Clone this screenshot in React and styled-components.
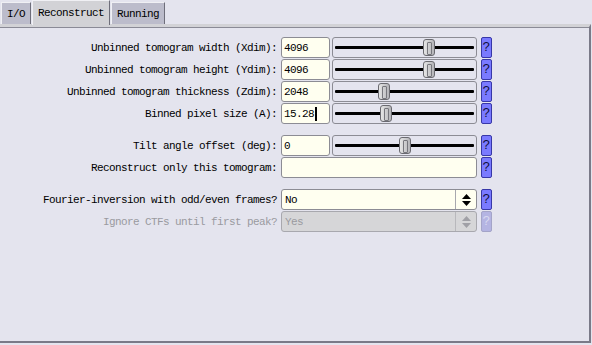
import React from "react";
import styled, { createGlobalStyle } from "styled-components";

const GlobalStyle = createGlobalStyle`
  html, body {
    margin: 0;
    padding: 0;
    background: #e4e4ee;
  }
  body {
    font-family: "Liberation Mono", "DejaVu Sans Mono", monospace;
    font-size: 11px;
    letter-spacing: -0.6px;
    color: #000;
  }
`;

const Window = styled.div`
  width: 592px;
  height: 345px;
  background: #e4e4ee;
  display: flex;
  flex-direction: column;
`;

const TabBar = styled.div`
  display: flex;
  align-items: flex-end;
  height: 24px;
  padding-left: 1px;
  gap: 1px;
`;

const Tab = styled.div`
  height: ${(p) => (p.$active ? 25 : 22)}px;
  padding: 0 5px;
  box-sizing: border-box;
  display: flex;
  align-items: center;
  background: ${(p) => (p.$active ? "#d2d2d6" : "#bcbccb")};
  border-top: 1px solid #f0f0f4;
  border-left: 1px solid #f0f0f4;
  border-right: 1px solid #6e6e7a;
  margin-bottom: ${(p) => (p.$active ? -1 : 0)}px;
  position: relative;
  z-index: ${(p) => (p.$active ? 1 : 0)};
`;

const Panel = styled.div`
  flex: 1;
  margin-right: 1px;
  margin-bottom: 2px;
  border-top: 3px solid #d2d2d6;
  border-right: 2px solid #7a7a88;
  border-bottom: 2px solid #7a7a88;
  box-shadow: inset 0 1px 0 #8a8a96;
  padding-top: 10px;
`;

const Form = styled.div`
  display: flex;
  flex-direction: column;
`;

const Group = styled.div`
  display: flex;
  flex-direction: column;
  gap: 1px;
  margin-bottom: 11px;
`;

const Row = styled.div`
  display: grid;
  grid-template-columns: 277px 196px 11px;
  column-gap: 4px;
  height: 21px;
  align-items: center;
  color: ${(p) => (p.$disabled ? "#9a9aa0" : "#000")};
`;

const Label = styled.div`
  text-align: right;
  white-space: nowrap;
`;

const Controls = styled.div`
  display: flex;
  gap: 2px;
  height: 21px;
`;

const Field = styled.div`
  box-sizing: border-box;
  width: ${(p) => p.$width || "100%"};
  height: 21px;
  background: ${(p) => (p.$disabled ? "#d6d6d8" : "#fffff0")};
  border: 1px solid ${(p) => (p.$disabled ? "#a8a8ae" : "#8c8c94")};
  border-radius: 3px;
  display: flex;
  align-items: center;
  padding-left: 2px;
  flex-shrink: 0;
`;

const Caret = styled.span`
  display: inline-block;
  width: 2px;
  height: 14px;
  background: #000;
  margin-left: 1px;
`;

const SliderBox = styled.div`
  flex: 1;
  box-sizing: border-box;
  height: 21px;
  border: 1px solid #8c8c94;
  border-radius: 3px;
  position: relative;
  display: flex;
  align-items: center;
  padding: 0 2px;
`;

const Track = styled.div`
  flex: 1;
  height: 3px;
  background: #000;
  border-radius: 1px;
`;

const Thumb = styled.div`
  position: absolute;
  top: 1px;
  width: 12px;
  height: 17px;
  box-sizing: border-box;
  border: 1px solid #6a6a70;
  border-radius: 3px;
  background: linear-gradient(to right, #e6e6e6, #b4b4b8);
  &::after {
    content: "";
    position: absolute;
    left: 3px;
    top: 2px;
    width: 3px;
    height: 11px;
    border: 1px solid #77777d;
    border-radius: 1px;
  }
`;

const Choice = styled(Field)`
  padding-left: 0;
`;

const ChoiceText = styled.div`
  flex: 1;
  padding-left: 3px;
`;

const ChoiceArrows = styled.div`
  width: 20px;
  height: 100%;
  border-left: 1px solid ${(p) => (p.$disabled ? "#b8b8bc" : "#a8a8ae")};
  display: flex;
  align-items: center;
  justify-content: center;
`;

const Help = styled.div`
  box-sizing: border-box;
  width: 11px;
  height: 21px;
  border-radius: 2px;
  border: 1px solid ${(p) => (p.$disabled ? "#a4a4c8" : "#3838a8")};
  background: ${(p) => (p.$disabled ? "#b4b4e2" : "#7a7aff")};
  color: ${(p) => (p.$disabled ? "#d8d8f0" : "#101040")};
  display: flex;
  align-items: center;
  justify-content: center;
  font-size: 13px;
  letter-spacing: 0;
`;

const Arrows = ({ color }) => (
  <svg width="9" height="12" viewBox="0 0 9 12">
    <polygon points="4.5,0 9,5 0,5" fill={color} />
    <polygon points="0,7 9,7 4.5,12" fill={color} />
  </svg>
);

const SliderRow = ({ label, value, pos, caret }) => (
  <Row>
    <Label>{label}</Label>
    <Controls>
      <Field $width="49px">
        {value}
        {caret && <Caret />}
      </Field>
      <SliderBox>
        <Track />
        <Thumb style={{ left: `${pos}px` }} />
      </SliderBox>
    </Controls>
    <Help>?</Help>
  </Row>
);

export default function App() {
  return (
    <Window>
      <GlobalStyle />
      <TabBar>
        <Tab>I/O</Tab>
        <Tab $active>Reconstruct</Tab>
        <Tab>Running</Tab>
      </TabBar>
      <Panel>
        <Form>
          <Group>
            <SliderRow label="Unbinned tomogram width (Xdim):" value="4096" pos={90} />
            <SliderRow label="Unbinned tomogram height (Ydim):" value="4096" pos={90} />
            <SliderRow label="Unbinned tomogram thickness (Zdim):" value="2048" pos={45} />
            <SliderRow label="Binned pixel size (A):" value="15.28" pos={47} caret />
          </Group>
          <Group>
            <SliderRow label="Tilt angle offset (deg):" value="0" pos={66} />
            <Row>
              <Label>Reconstruct only this tomogram:</Label>
              <Field />
              <Help>?</Help>
            </Row>
          </Group>
          <Group>
            <Row>
              <Label>Fourier-inversion with odd/even frames?</Label>
              <Choice>
                <ChoiceText>No</ChoiceText>
                <ChoiceArrows>
                  <Arrows color="#000" />
                </ChoiceArrows>
              </Choice>
              <Help>?</Help>
            </Row>
            <Row $disabled>
              <Label>Ignore CTFs until first peak?</Label>
              <Choice $disabled>
                <ChoiceText>Yes</ChoiceText>
                <ChoiceArrows $disabled>
                  <Arrows color="#a0a0a6" />
                </ChoiceArrows>
              </Choice>
              <Help $disabled>?</Help>
            </Row>
          </Group>
        </Form>
      </Panel>
    </Window>
  );
}
